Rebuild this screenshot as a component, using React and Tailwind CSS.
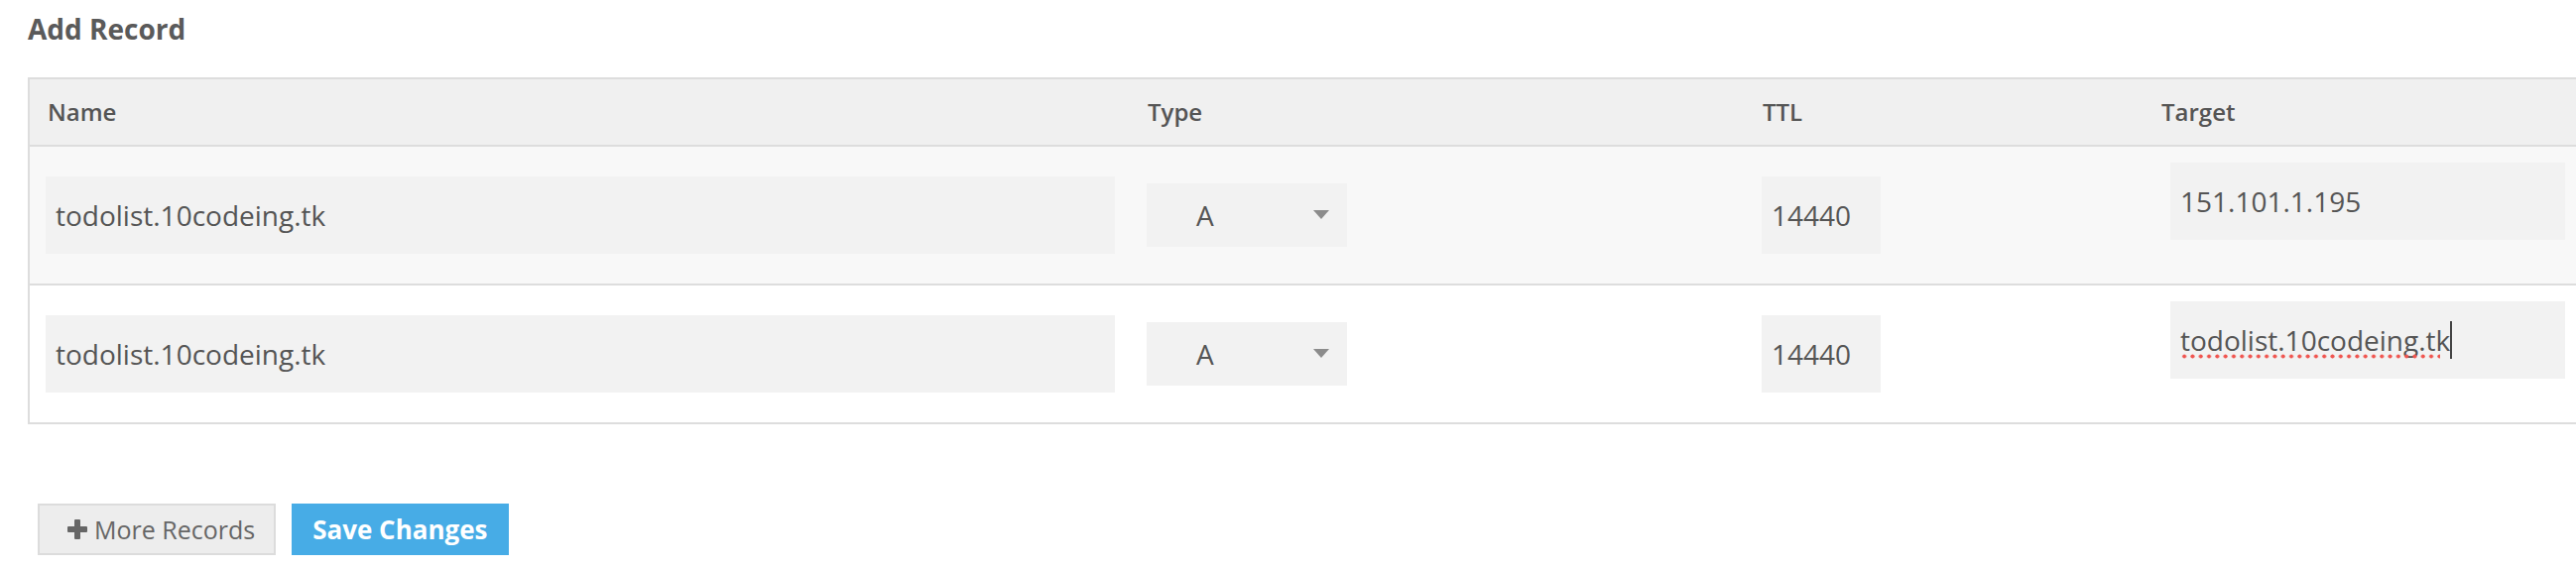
import React from 'react';

const records = [
  { name: 'todolist.10codeing.tk', type: 'A', ttl: '14440', target: '151.101.1.195', editing: false },
  { name: 'todolist.10codeing.tk', type: 'A', ttl: '14440', target: 'todolist.10codeing.tk', editing: true },
];

const SelectArrow = () => (
  <svg width="18" height="10" viewBox="0 0 18 10">
    <polygon points="1,0 17,0 9,9" fill="#8c8c8c" />
  </svg>
);

const PlusIcon = () => (
  <svg width="20" height="20" viewBox="0 0 20 20">
    <rect x="7" y="0" width="6" height="20" rx="1" fill="#666" />
    <rect x="0" y="7" width="20" height="6" rx="1" fill="#666" />
  </svg>
);

const RecordRow = ({ record, striped }) => (
  <div
    className={`grid grid-cols-[1110px_620px_403px_439px] ${
      striped ? 'h-[140px] bg-[#f8f8f8] border-b-2 border-[#ddd]' : 'h-[138px] bg-white'
    }`}
  >
    {/* Name */}
    <div className="pl-[16px] flex items-center">
      <div className="w-[1078px] h-[78px] bg-[#f2f2f2] pl-[10px] flex items-center text-[28px] text-[#555]">
        {record.name}
      </div>
    </div>
    {/* Type */}
    <div className="pl-[16px] flex items-center">
      <div className="w-[202px] h-[64px] bg-[#f2f2f2] pl-[50px] pr-[17px] flex items-center justify-between text-[28px] text-[#555]">
        <span>{record.type}</span>
        <SelectArrow />
      </div>
    </div>
    {/* TTL */}
    <div className="pl-[16px] flex items-center">
      <div className="w-[120px] h-[78px] bg-[#f2f2f2] pl-[10px] flex items-center text-[28px] text-[#555]">
        {record.ttl}
      </div>
    </div>
    {/* Target */}
    <div className="pl-[25px] flex items-start">
      <div className="mt-[16px] w-[398px] h-[78px] bg-[#f2f2f2] pl-[10px] flex items-center text-[28px] text-[#555]">
        {record.editing ? (
          <span className="relative inline-block leading-[38px] border-r-2 border-[#444]">
            {record.target}
            <span className="absolute left-0 right-[10px] top-[33px] h-[5px] bg-[radial-gradient(circle,#f0554f_1.7px,transparent_2.3px)] bg-[length:8.3px_5px]" />
          </span>
        ) : (
          record.target
        )}
      </div>
    </div>
  </div>
);

const App = () => {
  return (
    <div className="w-[2597px] h-[573px] overflow-hidden bg-white font-['Open_Sans',sans-serif]">
      <h2 className="pl-[28px] pt-[10px] text-[28px] leading-[38px] font-bold text-[#5a5a5a]">
        Add Record
      </h2>

      <div className="mt-[30px] ml-[28px] w-[2576px] border-2 border-[#ddd]">
        {/* Header */}
        <div className="grid grid-cols-[1110px_620px_403px_439px] h-[68px] bg-[#f0f0f0] border-b-2 border-[#ddd] text-[24px] font-semibold text-[#555]">
          <div className="pl-[18px] flex items-center">Name</div>
          <div className="pl-[17px] flex items-center">Type</div>
          <div className="pl-[17px] flex items-center">TTL</div>
          <div className="pl-[16px] flex items-center">Target</div>
        </div>
        {records.map((record, index) => (
          <RecordRow key={index} record={record} striped={index === 0} />
        ))}
      </div>

      <div className="mt-[80px] ml-[38px] flex gap-[16px]">
        <button className="h-[52px] border-2 border-[#dcdcdc] bg-[#ededed] pl-[28px] pr-[19px] flex items-center gap-[7px] text-[25px] leading-none text-[#666]">
          <PlusIcon />
          More Records
        </button>
        <button className="h-[52px] bg-[#47ace6] px-[21px] flex items-center text-[26px] leading-none font-bold text-white">
          Save Changes
        </button>
      </div>
    </div>
  );
};

export default App;
